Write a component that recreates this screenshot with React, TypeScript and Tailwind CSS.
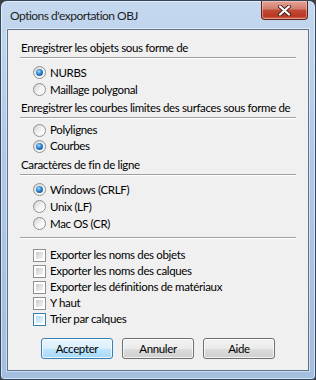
import type { ReactNode } from "react";

const font = { fontFamily: "Lato, 'Liberation Sans', sans-serif" };

function Radio({ checked }: { checked?: boolean }) {
  return (
    <span className="flex h-[13px] w-[13px] shrink-0 items-center justify-center rounded-full border border-[#8e8f8f] bg-[linear-gradient(135deg,#d2d2d2,#f7f7f7_60%,#ffffff)]">
      {checked && (
        <span className="h-[7px] w-[7px] rounded-full bg-[radial-gradient(circle_at_40%_35%,#a6dcfb_0%,#2b80d0_45%,#0b427f_100%)]" />
      )}
    </span>
  );
}

function Check({ hover }: { hover?: boolean }) {
  return (
    <span
      className={`flex h-[13px] w-[13px] shrink-0 border bg-white p-[2px] ${
        hover ? "border-[#3c7fb1]" : "border-[#8e8f8f]"
      }`}
    >
      <span
        className={`h-full w-full ${
          hover
            ? "bg-[linear-gradient(135deg,#b1dbf4,#e4f4fd)]"
            : "bg-[linear-gradient(135deg,#cbcbcb,#f4f4f4)]"
        }`}
      />
    </span>
  );
}

function Heading({ children, className = "" }: { children: ReactNode; className?: string }) {
  return (
    <div
      className={`border-b border-[#a0a0a0] pb-[2px] pl-[1px] leading-[14px] whitespace-nowrap shadow-[0_1px_0_#ffffff] ${className}`}
    >
      {children}
    </div>
  );
}

function Option({ label, checked, h = "h-[17px]" }: { label: string; checked?: boolean; h?: string }) {
  return (
    <div className={`flex items-center gap-[4px] pl-[13px] ${h}`}>
      <Radio checked={checked} />
      <span className="leading-[14px]">{label}</span>
    </div>
  );
}

function Box({ label, hover }: { label: string; hover?: boolean }) {
  return (
    <div className="flex h-[16px] items-center gap-[4px] pl-[13px]">
      <Check hover={hover} />
      <span className="leading-[14px]">{label}</span>
    </div>
  );
}

function Button({ label, primary }: { label: string; primary?: boolean }) {
  return (
    <button
      className={`h-[21px] w-[72px] rounded-[3px] border leading-[14px] text-black shadow-[inset_0_0_0_1px_rgba(255,255,255,0.75)] ${
        primary
          ? "border-[#3c7fb1] bg-[linear-gradient(#eaf6fd,#d9f0fc_50%,#bee6fd_50%,#a7d9f5)]"
          : "border-[#707070] bg-[linear-gradient(#f2f2f2,#ebebeb_50%,#dddddd_50%,#cfcfcf)]"
      }`}
    >
      {label}
    </button>
  );
}

export default function App() {
  return (
    <div className="h-[380px] w-[316px] bg-[#404040] text-[11.5px] tracking-[-0.35px] text-black" style={font}>
      <div className="h-[380px] w-[316px] rounded-t-[7px] rounded-b-[4px] border border-[#34465c] bg-[linear-gradient(#c4d8ef,#b0c9e6_40%,#a3bedf)] shadow-[inset_0_0_0_1px_rgba(255,255,255,0.55)]">
        {/* title bar */}
        <div className="flex h-[28px] justify-between">
          <span className="self-center pl-[9px] pt-[1px] text-[12px] tracking-[-0.5px] text-[#1e1e1e]">
            Options d'exportation OBJ
          </span>
          <div className="mr-[7px] flex h-[19px] w-[47px] items-center justify-center rounded-b-[4px] border border-t-0 border-[#5b231c] bg-[linear-gradient(#e3a496,#d07c6c_45%,#c14a36_50%,#b83823_85%,#d2755c)] shadow-[inset_0_0_0_1px_rgba(255,220,210,0.45)]">
            <svg width="13" height="11" viewBox="0 0 13 11">
              <path d="M2 1.5 L11 9.5 M11 1.5 L2 9.5" stroke="#4a1e18" strokeWidth="4" strokeLinecap="round" />
              <path d="M2 1.5 L11 9.5 M11 1.5 L2 9.5" stroke="#ffffff" strokeWidth="2.2" strokeLinecap="round" />
            </svg>
          </div>
        </div>

        {/* client area */}
        <div className="ml-[6px] h-[342px] w-[302px] border border-[#5d7390] bg-[#f0f0f0] px-[12px] pt-[11px] shadow-[0_0_0_1px_rgba(255,255,255,0.45)]">
          <Heading>Enregistrer les objets sous forme de</Heading>
          <div className="mt-[6px]">
            <Option label="NURBS" checked />
            <Option label="Maillage polygonal" />
          </div>

          <Heading className="mt-[3px]">
            Enregistrer les courbes limites des surfaces sous forme de
          </Heading>
          <div className="mt-[4px]">
            <Option label="Polylignes" h="h-[16px]" />
            <Option label="Courbes" checked h="h-[16px]" />
          </div>

          <Heading className="mt-[4px]">Caractères de fin de ligne</Heading>
          <div className="mt-[6px]">
            <Option label="Windows (CRLF)" checked />
            <Option label="Unix (LF)" />
            <Option label="Mac OS (CR)" />
          </div>

          <div className="mt-[5px] border-b border-[#a0a0a0] shadow-[0_1px_0_#ffffff]" />

          <div className="mt-[9px]">
            <Box label="Exporter les noms des objets" />
            <Box label="Exporter les noms des calques" />
            <Box label="Exporter les définitions de matériaux" />
            <Box label="Y haut" />
            <Box label="Trier par calques" hover />
          </div>

          <div className="mt-[11px] flex gap-[9px] pl-[21px]">
            <Button label="Accepter" primary />
            <Button label="Annuler" />
            <Button label="Aide" />
          </div>
        </div>
      </div>
    </div>
  );
}
